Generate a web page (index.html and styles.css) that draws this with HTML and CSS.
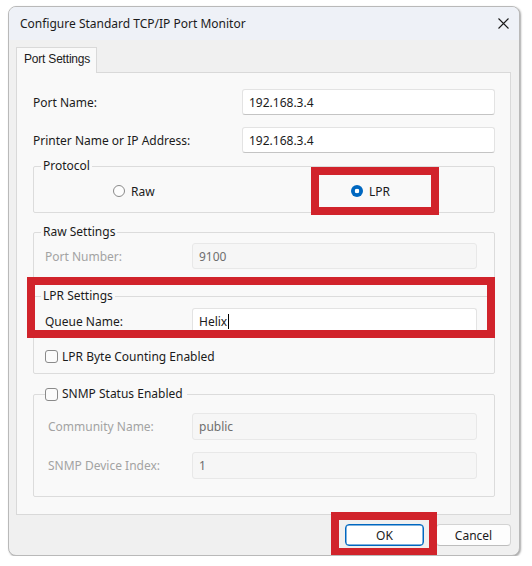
FILE: index.html
```html
<!DOCTYPE html>
<html>
<head>
<meta charset="utf-8">
<link rel="stylesheet" href="styles.css">
</head>
<body>
<div class="window">
  <div class="titlebar">
    <span class="title">Configure Standard TCP/IP Port Monitor</span>
    <svg class="close" width="11" height="11" viewBox="0 0 11 11"><path d="M0.5 0.5 L10.5 10.5 M10.5 0.5 L0.5 10.5" stroke="#1b1b1b" stroke-width="1.1" fill="none"/></svg>
  </div>
  <div class="content">
    <div class="tabs"><div class="tab">Port Settings</div></div>
    <div class="panel">
      <div class="row"><span class="lbl">Port Name:</span><div class="input">192.168.3.4</div></div>
      <div class="row row2"><span class="lbl">Printer Name or IP Address:</span><div class="input">192.168.3.4</div></div>

      <fieldset class="group protocol">
        <legend>Protocol</legend>
        <div class="radios">
          <span class="radio-item"><span class="radio"></span>Raw</span>
          <span class="radio-item"><span class="radio checked"></span>LPR</span>
        </div>
      </fieldset>

      <fieldset class="group raw">
        <legend>Raw Settings</legend>
        <div class="field"><span class="flbl dim">Port Number:</span><div class="input disabled">9100</div></div>
      </fieldset>

      <fieldset class="group lpr">
        <legend>LPR Settings</legend>
        <div class="field"><span class="flbl">Queue Name:</span><div class="input">Helix<span class="caret"></span></div></div>
        <div class="checkrow"><span class="check"></span>LPR Byte Counting Enabled</div>
      </fieldset>

      <fieldset class="group snmp">
        <legend><span class="check"></span>SNMP Status Enabled</legend>
        <div class="field tall"><span class="flbl dim">Community Name:</span><div class="input disabled">public</div></div>
        <div class="field tall second"><span class="flbl dim">SNMP Device Index:</span><div class="input disabled">1</div></div>
      </fieldset>
    </div>
    <div class="footer">
      <button class="btn primary">OK</button>
      <button class="btn cancel">Cancel</button>
    </div>
  </div>
  <div class="mark mark-lpr"></div>
  <div class="mark mark-settings"></div>
  <div class="mark mark-ok"></div>
</div>
</body>
</html>
```

FILE: styles.css
```css
* { box-sizing: border-box; }

body {
  margin: 0;
  background: #ffffff;
  font-family: "Noto Sans", "Segoe UI", sans-serif;
  font-size: 12px;
  color: #1b1b1b;
}

.window {
  position: relative;
  margin: 6px 0 0 8px;
  width: 512px;
  height: 550px;
  border: 1px solid #b9b9b9;
  border-radius: 8px;
  background: #f0f0f0;
  box-shadow: 1px 1px 2px rgba(0, 0, 0, 0.35);
  overflow: hidden;
}

.titlebar {
  height: 33px;
  background: #eef1f7;
  display: flex;
  align-items: center;
  justify-content: space-between;
  padding: 0 10px 0 11px;
}

.title {
  font-size: 12px;
  color: #1b1b1b;
}

.close { display: block; }

.content {
  padding: 7px 8px 0 7px;
}

.tabs { display: flex; }

.tab {
  position: relative;
  z-index: 1;
  width: 81px;
  height: 26px;
  margin-bottom: -1px;
  padding: 4px 0 0 7px;
  background: #f9f9f9;
  border: 1px solid #d9d9d9;
  border-bottom: none;
  font-family: "Liberation Sans", Arial, sans-serif;
  font-size: 12px;
  letter-spacing: -0.2px;
}

.panel {
  height: 443px;
  background: #f9f9f9;
  border: 1px solid #d9d9d9;
  padding: 16px 15px 0 16px;
}

.row {
  display: flex;
  align-items: center;
  height: 26px;
}

.row2 { margin-top: 12px; }

.lbl { width: 209px; }

.input {
  flex: 1;
  height: 26px;
  display: flex;
  align-items: center;
  padding-left: 6px;
  background: #ffffff;
  border: 1px solid #e3e3e3;
  border-bottom-color: #c4c4c4;
  border-radius: 3px;
  color: #1b1b1b;
}

.input.disabled {
  background: #f6f6f6;
  border-color: #e8e8e8;
  color: #6e6e6e;
}

.caret {
  display: inline-block;
  width: 1px;
  height: 15px;
  margin-left: 1px;
  background: #000;
}

.group {
  margin: 0;
  padding: 0;
  min-inline-size: 0;
  border: 1px solid #dcdcdc;
  border-radius: 2px;
}

.group legend {
  margin-left: 7px;
  padding: 0 2px;
  line-height: 16px;
}

.protocol { margin-top: 5px; }

.radios {
  display: grid;
  grid-template-columns: 238px auto;
  height: 22px;
  margin: 6px 0 10px 0;
  padding-left: 79px;
  align-items: center;
}

.radio-item {
  display: flex;
  align-items: center;
  gap: 6px;
}

.radio {
  width: 12px;
  height: 12px;
  border-radius: 50%;
  border: 1px solid #8a8a8a;
  background: #fdfdfd;
}

.radio.checked {
  border: none;
  background: radial-gradient(circle, #ffffff 0 2px, #0067c0 2.6px);
}

.raw { margin-top: 11px; padding: 3px 17px 13px 11px; }
.raw legend { margin-left: -4px; }

.lpr { margin-top: 5px; padding: 4px 17px 7px 11px; }
.lpr legend { margin-left: -4px; }

.snmp { margin-top: 10px; padding: 9px 17px 17px 14px; }
.snmp legend {
  margin-left: -3px;
  padding: 0 4px 0 0;
  display: flex;
  align-items: center;
  gap: 4px;
  line-height: 20px;
}

.field {
  display: flex;
  align-items: center;
  height: 26px;
}

.field.tall { height: 27px; }
.field.tall .input { height: 27px; }
.field.second { margin-top: 12px; }

.flbl { width: 147px; }
.snmp .flbl { width: 144px; }

.dim { color: #a3a3a3; }

.checkrow {
  display: flex;
  align-items: center;
  gap: 4px;
  height: 20px;
  margin-top: 12px;
}

.check {
  display: inline-block;
  width: 13px;
  height: 13px;
  border: 1px solid #8a8a8a;
  border-radius: 3px;
  background: #fbfbfb;
}

.footer {
  display: flex;
  justify-content: flex-end;
  gap: 12px;
  margin-top: 9px;
}

.btn {
  height: 22px;
  font-family: "Noto Sans", "Segoe UI", sans-serif;
  font-size: 12px;
  color: #1b1b1b;
  background: #fdfdfd;
  border: 1px solid #d3d3d3;
  border-bottom-color: #bdbdbd;
  border-radius: 4px;
  padding: 0;
}

.btn.primary {
  width: 79px;
  border: 1px solid #0067c0;
  box-shadow: inset 0 0 0 0.5px #0067c0;
  background: #ffffff;
}

.btn.cancel { width: 75px; }

.mark {
  position: absolute;
  border: 8px solid #d1232b;
}

.mark-lpr { left: 302px; top: 160px; width: 128px; height: 48px; }
.mark-settings { left: 18px; top: 270px; width: 468px; height: 61px; }
.mark-ok { left: 322px; top: 505px; width: 106px; height: 44px; }
```
